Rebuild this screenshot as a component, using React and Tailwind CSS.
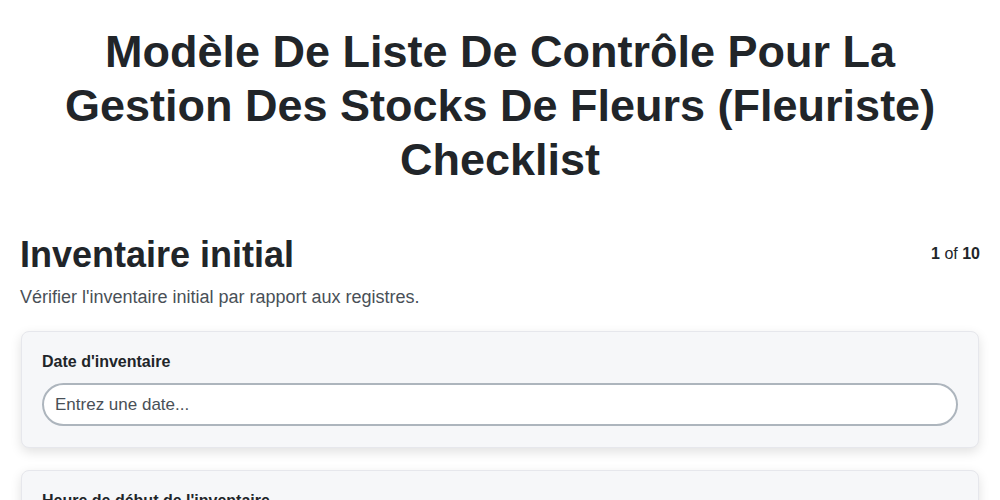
import React from 'react';

const fields = [
  { label: "Date d'inventaire", placeholder: 'Entrez une date...' },
  { label: "Heure de début de l'inventaire", placeholder: 'Entrez une heure...' },
];

const App = () => {
  return (
    <div className="min-h-screen bg-white text-[#212529] font-['Liberation_Sans',Arial,sans-serif]">
      <div className="px-5 pt-[25px]">
        <h1 className="text-center font-bold text-[45px] leading-[54px] px-10">
          Modèle De Liste De Contrôle Pour La Gestion Des Stocks De Fleurs (Fleuriste) Checklist
        </h1>

        <div className="mt-[46px] flex items-start justify-between">
          <h2 className="text-[36px] leading-[43px] font-bold">Inventaire initial</h2>
          <div className="text-[16px] mt-[9px]">
            <span className="font-bold">1</span> of <span className="font-bold">10</span>
          </div>
        </div>
        <p className="mt-[8px] text-[18px] leading-[26px] text-[#495057]">
          Vérifier l'inventaire initial par rapport aux registres.
        </p>

        <div className="mt-[21px] flex flex-col gap-[22px]">
          {fields.map((f) => (
            <div
              key={f.label}
              className="mx-px rounded-lg border border-[#e6e7ec] bg-[#f6f7f9] px-5 pt-[20px] pb-[21px] shadow-[0_4px_12px_rgba(0,0,0,0.12)]"
            >
              <label className="block text-[16px] font-bold leading-[20px]">{f.label}</label>
              <input
                type="text"
                placeholder={f.placeholder}
                className="mt-[11px] block w-full h-[43px] rounded-full border-2 border-[#adb5bd] bg-white px-[11px] text-[17px] placeholder:text-[#495057] outline-none"
              />
            </div>
          ))}
        </div>
      </div>
    </div>
  );
};

export default App;
